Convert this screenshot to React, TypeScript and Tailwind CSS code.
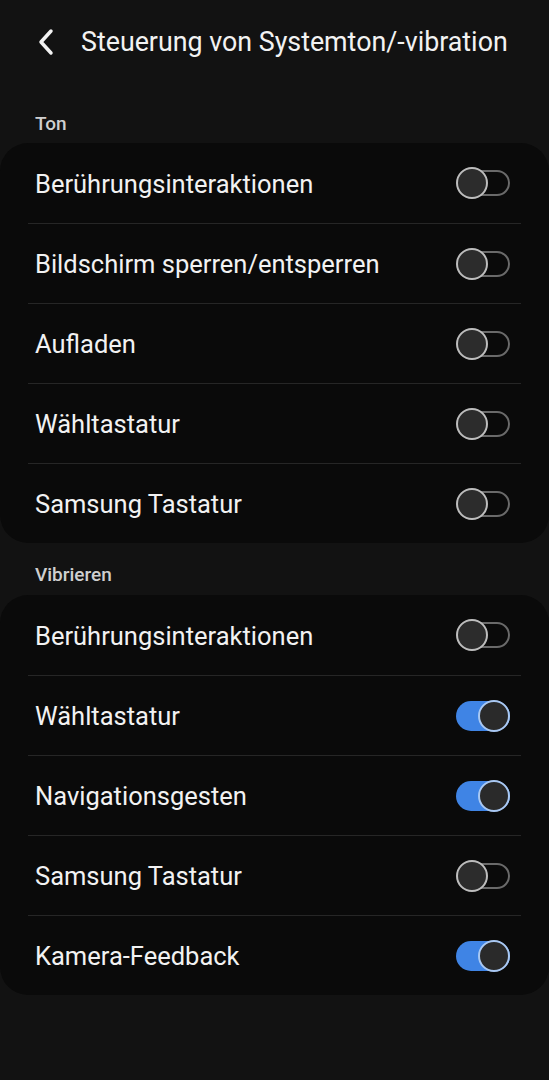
import React from "react";

type Row = { label: string; on: boolean };

const ton: Row[] = [
  { label: "Berührungsinteraktionen", on: false },
  { label: "Bildschirm sperren/entsperren", on: false },
  { label: "Aufladen", on: false },
  { label: "Wähltastatur", on: false },
  { label: "Samsung Tastatur", on: false },
];

const vib: Row[] = [
  { label: "Berührungsinteraktionen", on: false },
  { label: "Wähltastatur", on: true },
  { label: "Navigationsgesten", on: true },
  { label: "Samsung Tastatur", on: false },
  { label: "Kamera-Feedback", on: true },
];

function Toggle({ on }: { on: boolean }) {
  if (on) {
    return (
      <div className="relative w-[54px] h-[30px] rounded-full bg-[#3f84e5]">
        <div className="absolute right-0 top-[-1px] w-[32px] h-[32px] rounded-full bg-[#2a2a2a] border-2 border-[#a9c8f2]" />
      </div>
    );
  }
  return (
    <div className="relative w-[54px] h-[30px]">
      <div className="absolute left-[8px] right-0 top-[2px] h-[26px] rounded-full border-2 border-[#6a6a6a]" />
      <div className="absolute left-0 top-[-1px] w-[32px] h-[32px] rounded-full bg-[#2c2c2c] border-2 border-[#bdbdbd]" />
    </div>
  );
}

function Card({ rows }: { rows: Row[] }) {
  return (
    <div className="bg-[#0a0a0a] rounded-[28px]">
      {rows.map((r, i) => (
        <div key={i}>
          {i > 0 && <div className="mx-[28px] h-px bg-[#262626]" />}
          <div className={`flex items-center justify-between pl-[35px] pr-[39px] ${i === 0 ? "h-[80px]" : "h-[79px]"}`}>
            <span className="text-[25.5px] text-[#f2f2f2] leading-none pt-[3px]">{r.label}</span>
            <Toggle on={r.on} />
          </div>
        </div>
      ))}
    </div>
  );
}

export default function App() {
  return (
    <div
      className="w-[549px] h-[1080px] bg-[#121212] overflow-hidden"
      style={{ fontFamily: "Roboto, 'Noto Sans', sans-serif" }}
    >
      <div className="flex items-center h-[84px] pl-[37px]">
        <svg width="18" height="28" viewBox="0 0 18 28" className="mr-[26px]">
          <path d="M14 3 L4 14 L14 25" stroke="#f2f2f2" strokeWidth="3.5" fill="none" strokeLinecap="round" strokeLinejoin="round" />
        </svg>
        <span className="text-[26.8px] text-[#f2f2f2] leading-none">Steuerung von Systemton/-vibration</span>
      </div>
      <div className="h-[59px] flex items-end pl-[35px] pb-[10px]">
        <span className="text-[19px] font-medium text-[#cfcfcf] leading-none">Ton</span>
      </div>
      <Card rows={ton} />
      <div className="h-[52px] flex items-end pl-[35px] pb-[11px]">
        <span className="text-[19px] font-medium text-[#cfcfcf] leading-none">Vibrieren</span>
      </div>
      <Card rows={vib} />
    </div>
  );
}
